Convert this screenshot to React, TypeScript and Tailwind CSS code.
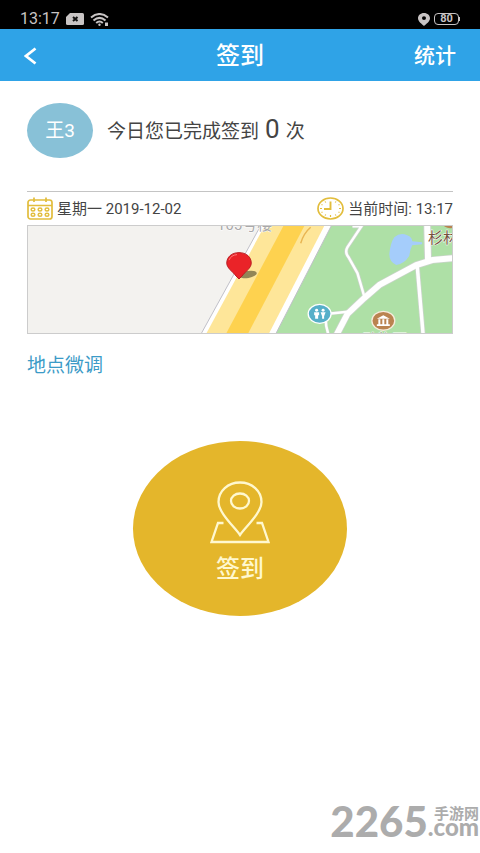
const StatusBar = () => (
  <div className="flex h-[29px] items-end justify-between bg-black pr-5 pl-5 text-[#c8c4c4]">
    <div className="flex h-5 items-center gap-[6px]">
      <span className="text-base leading-5">13:17</span>
      <svg className="h-[12px] w-[18px]" viewBox="0 0 18 12" aria-hidden="true">
        <path d="M4 0h12.500q1.500 0 1.500 1.500v9q0 1.500-1.500 1.500h-15Q0 12 0 10.500V4z" fill="currentColor" />
        <path d="M7 4l4.500 4M11.500 4L7 8" stroke="#111" strokeWidth="2" />
      </svg>
      <svg className="h-[13px] w-[20px]" viewBox="0 0 20 13" fill="none" stroke="currentColor" strokeWidth="2" aria-hidden="true">
        <path d="M1 4.500Q9.500-2.500 18 4.500" />
        <path d="M3.500 7.500Q9.500 2.200 15.500 7.500" />
        <path d="M6.200 10Q9.500 7 12.800 10" />
        <circle cx="9.500" cy="11.700" r="1.200" fill="currentColor" stroke="none" />
        <path d="M15 9.500h3v3.500H15z" fill="currentColor" stroke="none" />
      </svg>
    </div>
    <div className="flex h-5 items-center gap-1">
      <svg className="h-[13px] w-[12px]" viewBox="0 0 12 13" aria-hidden="true">
        <path fillRule="evenodd" d="M6 0c3.500 0 6 2.300 6 5.200C12 8.500 8 11 6 13 4 11 0 8.500 0 5.200 0 2.300 2.500 0 6 0zm0 3.200a2 1.900 0 100 3.800 2 1.900 0 000-3.800z" fill="currentColor" />
      </svg>
      <div className="flex items-center">
        <span className="flex h-3 w-[25px] items-center justify-center rounded border-[1px] border-current text-[11px] leading-3 font-bold">80</span>
        <span className="h-1 w-px bg-current" />
      </div>
    </div>
  </div>
);

const Header = () => (
  <header className="grid h-[52px] grid-cols-3 items-center bg-[#2fa3e7] px-6 pt-px text-white">
    <button type="button" aria-label="返回" className="justify-self-start">
      <svg className="h-[18px] w-[13px]" viewBox="0 0 13 18" fill="none" stroke="currentColor" strokeWidth="2.800" aria-hidden="true">
        <path d="M11.500 1.500L2 9l9.500 7.500" />
      </svg>
    </button>
    <h1 className="justify-self-center text-2xl leading-8 font-medium">签到</h1>
    <button type="button" className="justify-self-end text-[21px] leading-8 font-medium">统计</button>
  </header>
);

const CalendarIcon = () => (
  <svg className="h-[23px] w-[26px]" viewBox="0 0 26 23" fill="none" stroke="#e2bd3c" strokeWidth="1.700" aria-hidden="true">
    <rect x="1" y="3" width="24" height="19" rx="2.500" />
    <path d="M1 8.500h24M7 .5v4.500M19 .5v4.500" />
    {[12.500, 17.800].map((y) =>
      [6, 13, 20].map((x) => <ellipse key={`${x}-${y}`} cx={x} cy={y} rx="1.900" ry="1.500" strokeWidth="1.400" />)
    )}
  </svg>
);

const ClockIcon = () => (
  <svg className="h-[23px] w-[27px]" viewBox="0 0 27 23" fill="none" stroke="#e2bd3c" strokeWidth="1.700" aria-hidden="true">
    <ellipse cx="13.500" cy="11.500" rx="12.500" ry="10.500" />
    <path d="M13.500 4.500v7.500H7" strokeWidth="1.900" />
    <path
      d="M19 4.500l-.8 1M22.500 7.500l-1 .5M24 11.500h-2M22.500 15.500l-1-.5M19 18.500l-.8-1M13.500 20v-2M8 18.500l.8-1M4.500 15.500l1-.5M3 11.500h2M4.500 7.500l1 .5M8 4.500l.8 1"
      strokeWidth="1.200"
    />
  </svg>
);

const LocationMap = () => (
  <svg
    className="block h-[109px] w-full border border-[#ccc]"
    viewBox="0 0 426 109"
    preserveAspectRatio="xMidYMid slice"
    role="img"
    aria-label="当前位置"
  >
    <rect width="426" height="109" fill="#f3f2ef" />
    <path d="M303 0H426V109H247z" fill="#aee0a6" />

    {/* Main avenue */}
    <path d="M234 0H305L249 109H174z" fill="#fff" />
    <path d="M234 0L174 109M305 0L249 109" stroke="#c0c0c8" />
    <path d="M238 0H298L242 109H179z" fill="#fee699" />
    <path d="M257 0H278L221 109H199z" fill="#fed24f" />
    <path d="M284 2Q277 8 274 18" fill="none" stroke="#e9b552" strokeWidth="1.500" />

    {/* Paths in the park */}
    <g fill="none" stroke="#c9d3c9" strokeLinejoin="round">
      <path d="M308 114L321 89L338 73L353 60L390 40L406 35L427 33" strokeWidth="7.500" />
      <path d="M401-2L402 37" strokeWidth="8" />
      <path d="M391 40L397 110" strokeWidth="5" />
      <path d="M337-2L321 22Q318 27 322 32L331 48L338 72M326 1H336" strokeWidth="4" />
      <path d="M302 89L321 87M299 93Q299 102 302 110" strokeWidth="3.500" />
    </g>
    <g fill="none" stroke="#fff" strokeLinejoin="round">
      <path d="M308 114L321 89L338 73L353 60L390 40L406 35L427 33" strokeWidth="6" />
      <path d="M401-2L402 37" strokeWidth="6" />
      <path d="M391 40L397 110" strokeWidth="3.500" />
      <path d="M337-2L321 22Q318 27 322 32L331 48L338 72M326 1H336" strokeWidth="2.500" />
      <path d="M302 89L321 87M299 93Q299 102 302 110" strokeWidth="2.500" />
    </g>
    <path d="M368 12Q374 7 381 10Q386 12 386 16L396 17V19L386 20Q384 24 383 31Q378 39 370 40Q363 37 363 29Q364 18 368 12z" fill="#a5cdfb" />

    <g fontFamily="Roboto, 'Noto Sans CJK SC', sans-serif" stroke="#fff" strokeWidth="1" paintOrder="stroke">
      <text x="190" y="5" fontSize="15" fill="#aaa9aa">105号楼</text>
      <text x="402" y="18" fontSize="15" fill="#75513c">杉林</text>
      <text x="336" y="120" fontSize="15" fill="#8d9a7c">动物园</text>
    </g>
    <ellipse cx="424" cy="-2" rx="7" ry="5" fill="#b98350" />

    {/* Restroom */}
    <ellipse cx="293" cy="89" rx="11.500" ry="9.500" fill="#56afc9" stroke="#fff" strokeWidth="1.300" />
    <g fill="#fff">
      <circle cx="290" cy="85.500" r="1.500" />
      <circle cx="296.500" cy="85.500" r="1.500" />
      <path d="M287.500 87.500h5v3h-1v3.500h-3v-3.500h-1zM294 87.500h5l-1.500 4v2.500h-2v-2.500z" />
    </g>

    {/* Museum */}
    <ellipse cx="357" cy="96" rx="11.500" ry="9.500" fill="#ba8350" stroke="#f7ecdc" strokeWidth="1.300" />
    <path d="M357 90.500l6.500 3.500h-13zM352 94.500h2v5h-2zM356 94.500h2v5h-2zM360 94.500h2v5h-2zM350.500 99.500h13v1.700h-13z" fill="#fff" />

    {/* Current position */}
    <ellipse cx="221" cy="49.500" rx="9" ry="3.500" fill="#6d6541" opacity=".75" transform="rotate(-10 221 49.500)" />
    <path d="M212 27.500c7.500 0 12.300 4.500 12.300 10.500 0 5-5.500 8-9.300 13l-3 3-3-3c-3.800-5-9.300-8-9.300-13 0-6 4.800-10.500 12.300-10.500z" fill="#ea2328" stroke="#b81d22" />
    <path d="M202 35q2-5 8-5.500" fill="none" stroke="#f77" />
  </svg>
);

const CheckInIcon = () => (
  <svg className="h-16 w-[62px]" viewBox="0 0 62 64" fill="none" stroke="currentColor" strokeWidth="2.300" aria-hidden="true">
    <path d="M31 54C26 46.500 9.500 32 9.500 21 9.500 10 19 1.500 31 1.500s21.500 8.500 21.500 19.500C52.500 32 36 46.500 31 54z" />
    <ellipse cx="31" cy="20" rx="9" ry="7.500" />
    <path d="M14.500 42H9L2.500 61H59.500L53 42H47.500" />
  </svg>
);

const Watermark = () => (
  <footer className="mt-auto flex items-end justify-end pr-px pb-[10px] font-[Lato,'Noto_Sans_CJK_SC',sans-serif] font-black text-[#acacac]">
    <span className="text-[42px] leading-[44px]">2265</span>
    <span className="flex flex-col items-end pb-[10px]">
      <span className="text-[15px] leading-4 font-bold">手游网</span>
      <span className="text-2xl leading-3">.com</span>
    </span>
  </footer>
);

const App = () => {
  return (
    <div className="flex min-h-screen flex-col bg-white font-[Roboto,'Noto_Sans_CJK_SC',sans-serif] text-[#444]">
      <StatusBar />
      <Header />

      <main className="flex flex-col px-[27px] pt-[22px]">
        <section className="flex items-center gap-[14px]">
          <div className="flex h-[55px] w-[66px] items-center justify-center rounded-[50%] bg-[#88c1d7] text-[19px] leading-6 text-white">
            王3
          </div>
          <p className="flex items-baseline gap-[6px] text-[19px] leading-8">
            今日您已完成签到
            <span className="text-[26px]">0</span>
            次
          </p>
        </section>

        <section className="mt-[33px] border-t border-[#c4c4c4]">
          <div className="flex h-[33px] items-center justify-between text-[15px] leading-5">
            <div className="flex items-center gap-1">
              <CalendarIcon />
              <span>星期一 2019-12-02</span>
            </div>
            <div className="flex items-center gap-1">
              <ClockIcon />
              <span>当前时间: 13:17</span>
            </div>
          </div>
          <LocationMap />
        </section>

        <a href="#adjust" className="mt-5 self-start text-[19px] leading-6 text-[#3c9bc7]">
          地点微调
        </a>

        <button
          type="button"
          className="mt-[63px] flex h-[175px] w-[214px] flex-col items-center justify-center gap-2 self-center rounded-[50%] bg-[#e4b62b] pt-2 text-[#fff8cf]"
        >
          <CheckInIcon />
          <span className="text-2xl leading-8 font-medium">签到</span>
        </button>
      </main>

      <Watermark />
    </div>
  );
};

export default App;
